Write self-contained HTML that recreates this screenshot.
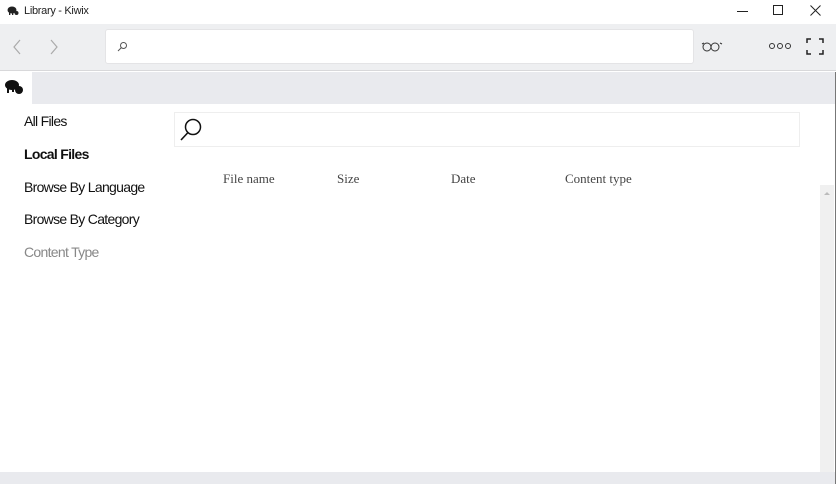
<!DOCTYPE html>
<html><head><style>
*{margin:0;padding:0;box-sizing:border-box}
body{width:836px;height:484px;overflow:hidden;background:#fff;font-family:"Liberation Sans","DejaVu Sans",sans-serif;position:relative}
.a{position:absolute}
.nav{font-size:14px;color:#111;left:24px;letter-spacing:-0.7px}
.th{font-family:"Liberation Serif",serif;font-size:13px;color:#444;top:171px}
</style></head><body>
<div class="a" style="left:0;top:0;width:836px;height:24px;background:#fff"></div>
<svg class="a" style="left:7px;top:5px" width="12" height="12" viewBox="0 0 12 12"><ellipse cx="5" cy="5" rx="4.5" ry="3.5" fill="#222"/><rect x="2" y="7" width="1.3" height="3" fill="#222"/><rect x="5" y="7" width="1.3" height="3" fill="#222"/><circle cx="9.5" cy="8" r="2" fill="#222"/></svg>
<div class="a" style="left:24px;top:5px;font-size:11px;color:#222;letter-spacing:-0.3px">Library - Kiwix</div>
<div class="a" style="left:737px;top:11px;width:11px;height:1px;background:#222"></div>
<div class="a" style="left:773px;top:5px;width:10px;height:10px;border:1px solid #222"></div>
<svg class="a" style="left:810px;top:5px" width="11" height="11"><path d="M0.5 0.5L10.5 10.5M10.5 0.5L0.5 10.5" stroke="#222" stroke-width="1"/></svg>
<div class="a" style="left:0;top:24px;width:836px;height:47px;background:#eeeff1;border-bottom:1px solid #d8d8da"></div>
<svg class="a" style="left:12px;top:39px" width="10" height="16"><path d="M8 1L2 8L8 15" fill="none" stroke="#aaa" stroke-width="1.2"/></svg>
<svg class="a" style="left:49px;top:39px" width="10" height="16"><path d="M2 1L8 8L2 15" fill="none" stroke="#aaa" stroke-width="1.2"/></svg>
<div class="a" style="left:105px;top:29px;width:589px;height:35px;background:#fff;border-radius:3px;border:1px solid #e4e4e6"></div>
<svg class="a" style="left:117px;top:41px" width="11" height="11"><circle cx="6.5" cy="4.5" r="3" fill="none" stroke="#555" stroke-width="1"/><path d="M4.5 6.5L1 10" stroke="#555"/></svg>
<svg class="a" style="left:701px;top:41px" width="22" height="11"><circle cx="6" cy="6" r="4" fill="none" stroke="#333"/><circle cx="14" cy="6" r="4" fill="none" stroke="#333"/><path d="M1 3L3 2M21 3L19 2" stroke="#333"/></svg>
<svg class="a" style="left:768px;top:42px" width="24" height="8"><circle cx="4" cy="4" r="2.5" fill="none" stroke="#333"/><circle cx="12" cy="4" r="2.5" fill="none" stroke="#333"/><circle cx="20" cy="4" r="2.5" fill="none" stroke="#333"/></svg>
<svg class="a" style="left:806px;top:38px" width="18" height="17"><path d="M1 5V1H5M13 1H17V5M17 12V16H13M5 16H1V12" fill="none" stroke="#222" stroke-width="1.5"/></svg>
<div class="a" style="left:0;top:72px;width:836px;height:32px;background:#e9eaee"></div>
<div class="a" style="left:0;top:72px;width:32px;height:32px;background:#fff"></div>
<svg class="a" style="left:4px;top:78px" width="20" height="18" viewBox="0 0 20 18"><ellipse cx="8" cy="7" rx="7" ry="5" fill="#111"/><rect x="3" y="10" width="2" height="5" fill="#111"/><rect x="8" y="10" width="2" height="4" fill="#111"/><circle cx="15" cy="12" r="4" fill="#111"/></svg>
<div class="a nav" style="top:113px">All Files</div>
<div class="a nav" style="top:146px;font-weight:bold">Local Files</div>
<div class="a nav" style="top:179px">Browse By Language</div>
<div class="a nav" style="top:211px">Browse By Category</div>
<div class="a nav" style="top:244px;color:#888">Content Type</div>
<div class="a" style="left:174px;top:112px;width:626px;height:35px;border:1px solid #eee"></div>
<svg class="a" style="left:179px;top:117px" width="26" height="26"><circle cx="14" cy="10" r="7.5" fill="none" stroke="#111" stroke-width="1.5"/><path d="M9 15.5L2 23" stroke="#111" stroke-width="1.6"/></svg>
<div class="a th" style="left:223px">File name</div>
<div class="a th" style="left:337px">Size</div>
<div class="a th" style="left:451px">Date</div>
<div class="a th" style="left:565px">Content type</div>
<div class="a" style="left:820px;top:185px;width:14px;height:287px;background:#f0f0f0"></div>
<svg class="a" style="left:823px;top:190px" width="8" height="6"><path d="M1 5L4 2L7 5Z" fill="#bbb"/></svg>
<div class="a" style="left:835px;top:72px;width:1px;height:412px;background:#777"></div>
<div class="a" style="left:0;top:472px;width:835px;height:12px;background:#e9eaee"></div>
</body></html>
